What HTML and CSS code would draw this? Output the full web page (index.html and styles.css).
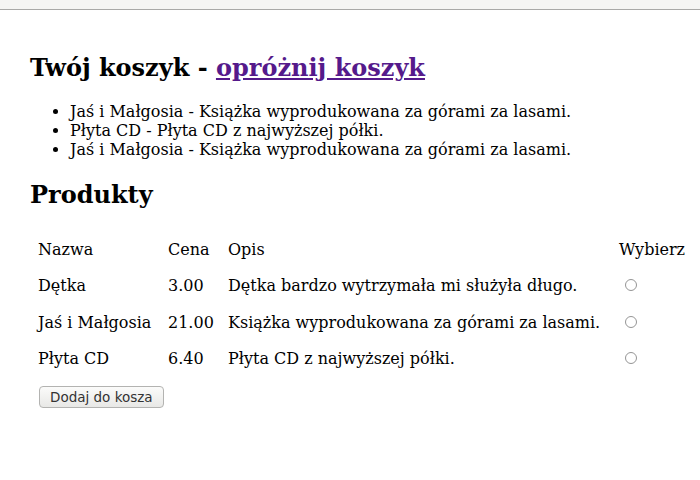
FILE: index.html
```html
<!DOCTYPE html>
<html lang="pl">
<head>
<meta charset="utf-8">
<title>Koszyk</title>
<link rel="stylesheet" href="styles.css">
</head>
<body>
<div class="topbar"></div>
<main class="page">
  <h1 class="cart-title">Twój koszyk - <a href="#" class="clear-link">opróżnij koszyk</a></h1>
  <ul class="cart-list">
    <li>Jaś i Małgosia - Książka wyprodukowana za górami za lasami.</li>
    <li>Płyta CD - Płyta CD z najwyższej półki.</li>
    <li>Jaś i Małgosia - Książka wyprodukowana za górami za lasami.</li>
  </ul>
  <h2 class="products-title">Produkty</h2>
  <form class="products-form">
    <table class="products">
      <colgroup>
        <col class="col-name">
        <col class="col-price">
        <col class="col-desc">
        <col class="col-pick">
      </colgroup>
      <tr><td>Nazwa</td><td>Cena</td><td>Opis</td><td>Wybierz</td></tr>
      <tr><td>Dętka</td><td>3.00</td><td>Dętka bardzo wytrzymała mi służyła długo.</td><td><span class="radio"></span></td></tr>
      <tr><td>Jaś i Małgosia</td><td>21.00</td><td>Książka wyprodukowana za górami za lasami.</td><td><span class="radio"></span></td></tr>
      <tr><td>Płyta CD</td><td>6.40</td><td>Płyta CD z najwyższej półki.</td><td><span class="radio"></span></td></tr>
    </table>
    <button type="button" class="add-btn">Dodaj do kosza</button>
  </form>
</main>
</body>
</html>
```
FILE: styles.css
```css
html, body {
  margin: 0;
  padding: 0;
  background: #ffffff;
}
body {
  font-family: "DejaVu Serif", serif;
  font-size: 16px;
  color: #000;
  width: 700px;
  overflow: hidden;
}
.topbar {
  height: 9px;
  background: #f5f5f3;
  border-bottom: 1px solid #a9a9a7;
}
.page {
  padding: 0 0 0 30px;
}
.cart-title {
  font-size: 24px;
  font-weight: bold;
  margin: 44px 0 0;
  line-height: 28px;
}
.clear-link {
  color: #551a8b;
  text-decoration: underline;
}
.cart-list {
  margin: 20px 0 0;
  padding-left: 40px;
  line-height: 19px;
}
.products-title {
  font-size: 24px;
  font-weight: bold;
  margin: 22px 0 0;
  line-height: 28px;
}
.products-form {
  margin-top: 22px;
}
.products {
  border-collapse: separate;
  border-spacing: 0 2px;
  table-layout: fixed;
  width: 670px;
}
.col-name { width: 130px; }
.col-price { width: 60px; }
.col-desc { width: 391px; }
.col-pick { width: 89px; }
.products td {
  padding: 8px;
  height: 18.33px;
  line-height: 18.33px;
  vertical-align: middle;
  white-space: nowrap;
}
.radio {
  display: inline-block;
  width: 10px;
  height: 10px;
  border: 1px solid #959595;
  border-radius: 50%;
  background: #fff;
  margin: 0 0 0 6px;
  vertical-align: 0;
}
.add-btn {
  display: block;
  margin: 8px 0 0 9px;
  font-family: "DejaVu Sans", sans-serif;
  font-size: 13.5px;
  color: #333;
  height: 22px;
  padding: 0 10px;
  border: 1px solid #b3b3b1;
  border-radius: 4px;
  background: linear-gradient(#fbfbfa, #e8e8e6);
}
```
